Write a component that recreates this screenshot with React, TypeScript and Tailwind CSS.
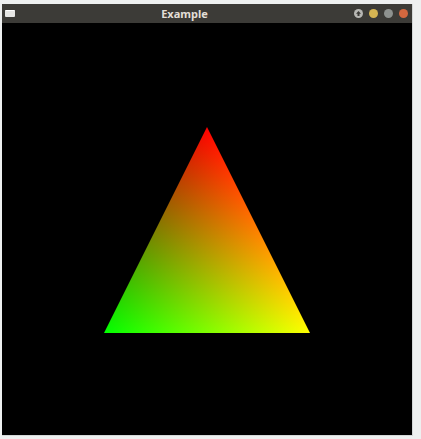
import React from "react";

export default function App() {
  return (
    <div className="w-[421px] h-[439px] bg-[#eef0f0] pt-[4px] pl-[2px] overflow-hidden">
      <div className="w-[411px] flex flex-col border-r border-b border-[#d3d7d7]">
        <div className="h-[19px] bg-[#3c3b37] flex items-center pl-[3px] pr-[4px]">
          <div className="w-[10px] h-[7px] bg-[#e6e6e4] rounded-[1px] border-t border-[#ffffff]" />
          <div className="flex-1 text-center text-[11px] font-bold text-[#e2ded6] leading-none [font-family:'Noto_Sans',sans-serif]">
            Example
          </div>
          <div className="flex items-center gap-[6px]">
            <div className="w-[9px] h-[9px] rounded-full bg-[#b7b7b3] flex items-center justify-center">
              <svg width="7" height="7" viewBox="0 0 7 7">
                <path d="M3.5 1 L6 3.8 L4.5 3.8 L4.5 6 L2.5 6 L2.5 3.8 L1 3.8 Z" fill="#3c3b37" />
              </svg>
            </div>
            <div className="w-[9px] h-[9px] rounded-full bg-[#d6b552]" />
            <div className="w-[9px] h-[9px] rounded-full bg-[#8e928f]" />
            <div className="w-[9px] h-[9px] rounded-full bg-[#d4683f]" />
          </div>
        </div>
        <div className="h-[412px] bg-black">
          <svg width="410" height="412" viewBox="0 0 410 412" className="block">
            <defs>
              <linearGradient id="red" gradientUnits="userSpaceOnUse" x1="102" y1="310" x2="266.8" y2="227.6">
                <stop offset="0" stopColor="#000000" />
                <stop offset="1" stopColor="#ff0000" />
              </linearGradient>
              <linearGradient id="green" gradientUnits="userSpaceOnUse" x1="0" y1="104" x2="0" y2="310">
                <stop offset="0" stopColor="#000000" />
                <stop offset="1" stopColor="#00ff00" />
              </linearGradient>
            </defs>
            <g style={{ isolation: "isolate" }}>
              <polygon points="205,104 102,310 308,310" fill="url(#red)" />
              <polygon points="205,104 102,310 308,310" fill="url(#green)" className="mix-blend-screen" />
            </g>
          </svg>
        </div>
      </div>
    </div>
  );
}
